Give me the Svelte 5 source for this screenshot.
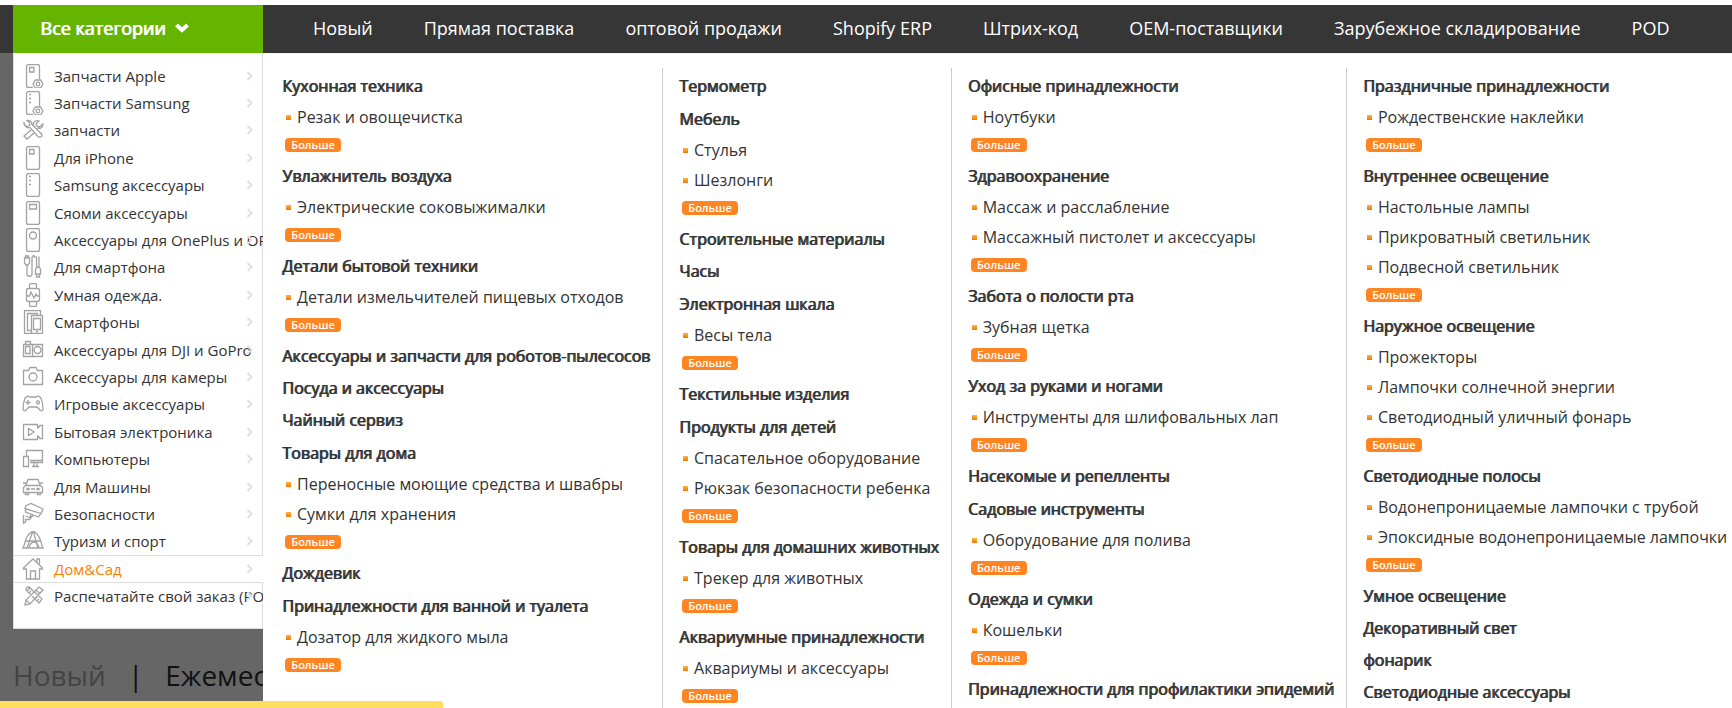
<script lang="ts">
	type Group = { title: string; items?: string[] };

	const navLinks = [
		'Новый',
		'Прямая поставка',
		'оптовой продажи',
		'Shopify ERP',
		'Штрих-код',
		'OEM-поставщики',
		'Зарубежное складирование',
		'POD'
	];

	const phone = 'M6.5 .5h9a2 2 0 0 1 2 2v19a2 2 0 0 1-2 2h-9a2 2 0 0 1-2-2v-19a2 2 0 0 1 2-2z';
	const phoneCut = 'M11 23.5H6.5a2 2 0 0 1-2-2v-19a2 2 0 0 1 2-2h9a2 2 0 0 1 2 2V15';
	const gear = 'M13.5 16h5l2.5 4-2.5 4h-5L11 20zM16 18.2a1.8 1.8 0 1 0 0 3.6a1.8 1.8 0 1 0 0-3.6z';
	const dots = 'M7 3.5h2M7 7.5h2M7 11.5h2';

	const categories = [
		{ name: 'Запчасти Apple', icon: `${phoneCut}M7.5 3.5h4.5v4.5H7.5z${gear}` },
		{ name: 'Запчасти Samsung', icon: `${phoneCut}${dots}${gear}` },
		{
			name: 'запчасти',
			icon: 'M2 6l3 3 3-2-1-3-2-1.5c3-.5 5 1 5 4l8 8c1 1 2 1 2 3s-3 2-4 1l-8-9c-3 1-6-1-6-5.5zM13 9l-2-2c0-3 3-5 6-4l-3 3 1 2 2 1 4-3c0 4-3 5-6 4M9 12l-7 6 3 3 7-6'
		},
		{ name: 'Для iPhone', icon: `${phone}M7.5 3.5h4.5v4.5H7.5z` },
		{ name: 'Samsung аксессуары', icon: `${phone}${dots}` },
		{ name: 'Сяоми аксессуары', icon: `${phone}M7.5 3.5h7v4.5h-7z` },
		{ name: 'Аксессуары для OnePlus и OPPO', icon: `${phone}M11 4a3.5 3.5 0 1 0 0 7a3.5 3.5 0 1 0 0-7z` },
		{
			name: 'Для смартфона',
			icon: 'M3.5 3V1h3v2M2.5 3h5v5L6 10H4L2.5 8zM5 10v9c0 3 5 3 5 0V3c0-3 3-3 3 0M14.5 1.5v10M17 1.5v10M13.5 14l1.5-2h2l1.5 2v5h-5zM14.5 19v3h3v-3'
		},
		{
			name: 'Умная одежда.',
			icon: 'M7.5 6V2q0-1.5 1.5-1.5h4q1.5 0 1.5 1.5v4M7.5 18v4q0 1.5 1.5 1.5h4q1.5 0 1.5-1.5v-4M6.5 5.5h9q2 0 2 2v9q0 2-2 2h-9q-2 0-2-2v-9q0-2 2-2zM4.5 13h3l1.5-4 3 6 2-4 1 2h2.5'
		},
		{
			name: 'Смартфоны',
			icon: 'M10.5 23.5h-8v-23h16v5M10 20.5H5.5v-17h10v2M9.5 5.5h11v18h-11zM11.5 8.5h7v11h-7zM14 21.5h2'
		},
		{
			name: 'Аксессуары для DJI и GoPro',
			icon: 'M1.5 6.5h19v12h-19zM3.5 6V3.5h5V6M3.5 8.5h4.5v7H3.5zM10.5 6v12M15.5 8.5a3.5 3.5 0 1 0 0 7a3.5 3.5 0 1 0 0-7z'
		},
		{
			name: 'Аксессуары для камеры',
			icon: 'M1.5 5.5h5l1.5-3h6l1.5 3h5v14h-19zM11 8a4 4 0 1 0 0 8a4 4 0 1 0 0-8z'
		},
		{
			name: 'Игровые аксессуары',
			icon: 'M3 6l3-2 2 1h6l2-1 3 2q2 5 2 11.5q-1.5 3-4-.5l-2-2H7l-2 2q-2.5 3.5-4 .5Q1 11 3 6zM6 8v5M3.5 10.5h5M16 9a1.5 1.5 0 1 0 0 3a1.5 1.5 0 1 0 0-3z'
		},
		{
			name: 'Бытовая электроника',
			icon: 'M15.5 8.5v-4h-14v15h14v-4M15.5 8.5l2.5-3h2.5v13H18l-2.5-3M6.5 8.5v7l5.5-3.5z'
		},
		{
			name: 'Компьютеры',
			icon: 'M4.5 9V3.5h16v12H8M1.5 9.5h5v10h-5zM8 13.5h12M10 19.5h7M12 16v3M15 16v3'
		},
		{
			name: 'Для Машины',
			icon: 'M4 10l2-5.5h10l2 5.5M1 8h3M18 8h3M3.5 10.5h15l2 2v5h-19v-5zM3.5 18v1.5h3V18M15.5 18v1.5h3V18M5 13.5h2v1H5zM15 13.5h2v1h-2zM9 14h4'
		},
		{
			name: 'Безопасности',
			icon: 'M4 3.5l5-2 12 5.5-2 4.500L3 6.500zM3.500 7v3l13 5 2.500-4M9 12.500l-1 3-4.500-1.500M1.500 13v8l2-1v-2.500h4L11 13.500'
		},
		{
			name: 'Туризм и спорт',
			icon: 'M1 19c2-3 1-6 4-11 4-7 8-7 12 0 3 5 2 8 4 11H1zM10.5 3L5 19M11.5 3L16 19M3 12h16M7 19c1-4 3-6 5-6s4 2 5 6'
		},
		{
			name: 'Дом&Сад',
			icon: 'M1.5 11L11 2l9.5 9v1h-3v10h-13V12h-3zM15 5V2h2.5v5M8.5 22v-8h5v8'
		},
		{
			name: 'Распечатайте свой заказ (POD)',
			icon: 'M4 6q0-3 3-3l13 12-3 4L4 6zM17 3l4 3-13 14-5 1 1-5zM5 7l3-3M7 9l2-2M13 15l2-2M15 17l2-2M14 6l4 4M4 16l4 4'
		}
	];

	const activeCategory = 'Дом&Сад';

	const columns: Group[][] = [
		[
			{ title: 'Кухонная техника', items: ['Резак и овощечистка'] },
			{ title: 'Увлажнитель воздуха', items: ['Электрические соковыжималки'] },
			{ title: 'Детали бытовой техники', items: ['Детали измельчителей пищевых отходов'] },
			{ title: 'Аксессуары и запчасти для роботов-пылесосов' },
			{ title: 'Посуда и аксессуары' },
			{ title: 'Чайный сервиз' },
			{ title: 'Товары для дома', items: ['Переносные моющие средства и швабры', 'Сумки для хранения'] },
			{ title: 'Дождевик' },
			{ title: 'Принадлежности для ванной и туалета', items: ['Дозатор для жидкого мыла'] }
		],
		[
			{ title: 'Термометр' },
			{ title: 'Мебель', items: ['Стулья', 'Шезлонги'] },
			{ title: 'Строительные материалы' },
			{ title: 'Часы' },
			{ title: 'Электронная шкала', items: ['Весы тела'] },
			{ title: 'Текстильные изделия' },
			{ title: 'Продукты для детей', items: ['Спасательное оборудование', 'Рюкзак безопасности ребенка'] },
			{ title: 'Товары для домашних животных', items: ['Трекер для животных'] },
			{ title: 'Аквариумные принадлежности', items: ['Аквариумы и аксессуары'] }
		],
		[
			{ title: 'Офисные принадлежности', items: ['Ноутбуки'] },
			{ title: 'Здравоохранение', items: ['Массаж и расслабление', 'Массажный пистолет и аксессуары'] },
			{ title: 'Забота о полости рта', items: ['Зубная щетка'] },
			{ title: 'Уход за руками и ногами', items: ['Инструменты для шлифовальных лап'] },
			{ title: 'Насекомые и репелленты' },
			{ title: 'Садовые инструменты', items: ['Оборудование для полива'] },
			{ title: 'Одежда и сумки', items: ['Кошельки'] },
			{ title: 'Принадлежности для профилактики эпидемий' }
		],
		[
			{ title: 'Праздничные принадлежности', items: ['Рождественские наклейки'] },
			{ title: 'Внутреннее освещение', items: ['Настольные лампы', 'Прикроватный светильник', 'Подвесной светильник'] },
			{ title: 'Наружное освещение', items: ['Прожекторы', 'Лампочки солнечной энергии', 'Светодиодный уличный фонарь'] },
			{ title: 'Светодиодные полосы', items: ['Водонепроницаемые лампочки с трубой', 'Эпоксидные водонепроницаемые лампочки'] },
			{ title: 'Умное освещение' },
			{ title: 'Декоративный свет' },
			{ title: 'фонарик' },
			{ title: 'Светодиодные аксессуары' }
		]
	];
</script>

<div class="page">
	<header class="topbar">
		<button class="all-categories">
			Все категории
			<svg width="14" height="10" viewBox="0 0 14 10"><path d="M1.5 2l5.5 5 5.5-5" /></svg>
		</button>
		<nav class="nav">
			{#each navLinks as link (link)}
				<a href="#top">{link}</a>
			{/each}
		</nav>
	</header>

	<div class="body">
		<div class="left">
			<aside class="sidebar">
				<ul class="categories">
					{#each categories as category (category.name)}
						<li class:active={category.name === activeCategory}>
							<a href="#category">
								<svg class="icon" viewBox="0 0 22 24"><path d={category.icon} /></svg>
								<span class="name">{category.name}</span>
								<svg class="chevron" viewBox="0 0 8 10"><path d="M1.5 1l4 4-4 4" /></svg>
							</a>
						</li>
					{/each}
				</ul>
			</aside>
			<div class="tabs">
				<span class="muted">Новый</span>
				<span>|</span>
				<span>Ежемесячный</span>
			</div>
		</div>

		<div class="panel">
			{#each columns as groups, i (i)}
				<div class="column">
					{#each groups as group (group.title)}
						<section class:plain={!group.items}>
							<h3><a href="#group">{group.title}</a></h3>
							{#if group.items}
								<ul>
									{#each group.items as item (item)}
										<li><a href="#item">{item}</a></li>
									{/each}
								</ul>
								<a class="more" href="#more">Больше</a>
							{/if}
						</section>
					{/each}
				</div>
			{/each}
		</div>
	</div>

	<div class="notice"></div>
</div>

<style>
	:global(body) {
		margin: 0;
		background: #fff;
	}

	.page {
		display: flex;
		flex-direction: column;
		height: 100vh;
		overflow: hidden;
		font-family: 'Open Sans', 'Noto Sans', sans-serif;
		color: #333;
	}

	a {
		color: inherit;
		text-decoration: none;
	}

	ul {
		list-style: none;
		margin: 0;
		padding: 0;
	}

	.topbar {
		display: flex;
		flex-shrink: 0;
		height: 48px;
		margin-top: 5px;
		padding-left: 13px;
		background: #363636;
	}

	.all-categories {
		display: flex;
		align-items: center;
		gap: 10px;
		flex-shrink: 0;
		width: 250px;
		padding: 0 0 2px 27px;
		border: none;
		background: #65b400;
		color: #fff;
		font-family: inherit;
		font-size: 18px;
		text-shadow: 1px 0 0 currentColor;
		cursor: pointer;
	}

	.all-categories svg path {
		fill: none;
		stroke: #fff;
		stroke-width: 4;
	}

	.nav {
		display: flex;
		align-items: center;
		gap: 51px;
		padding: 0 0 2px 50px;
		color: #fff;
		font-size: 18px;
		white-space: nowrap;
	}

	.body {
		display: flex;
		flex: 1;
		min-height: 0;
	}

	.left {
		flex-shrink: 0;
		box-sizing: border-box;
		width: 263px;
		padding-left: 13px;
		overflow: hidden;
		background: #666;
	}

	.sidebar {
		padding: 9px 0 18px;
		border: 1px solid #ddd;
		border-top: none;
		background: #fff;
	}

	.categories {
		display: grid;
		grid-template-rows: repeat(20, 1fr);
		height: 548px;
		margin-right: -1px;
	}

	.categories li {
		display: flex;
		border: solid transparent;
		border-width: 1px 0;
		overflow: hidden;
	}

	.categories li.active {
		border-color: #ddd;
		background: #fff;
		color: #ff7e00;
	}

	.categories a {
		display: flex;
		align-items: center;
		width: 100%;
		padding-left: 8px;
		font-size: 15px;
		white-space: nowrap;
	}

	.icon {
		flex-shrink: 0;
		width: 22px;
		height: 24px;
		margin-right: 10px;
	}

	.icon path {
		fill: none;
		stroke: #a2a2a2;
		stroke-width: 1.3;
	}

	.name {
		width: 192px;
		flex-shrink: 0;
	}

	.chevron {
		flex-shrink: 0;
		width: 8px;
		height: 10px;
	}

	.chevron path {
		fill: none;
		stroke: #e0e0e0;
		stroke-width: 2;
	}

	.tabs {
		display: flex;
		gap: 22px;
		margin-top: 27px;
		color: #111;
		font-size: 28px;
		white-space: nowrap;
	}

	.muted {
		color: #444;
	}

	.panel {
		display: flex;
		flex: 1;
		min-width: 0;
		padding: 14px 0 0 2px;
		border-top: 1px solid #eee;
		overflow: hidden;
		background: #fff;
	}

	.column {
		flex-shrink: 0;
		padding: 2px 12px 0 16px;
		border-left: 1px solid #ccc;
		white-space: nowrap;
	}

	.column:first-child {
		border-left-color: transparent;
	}

	.plain + section:not(.plain) {
		margin-top: 1px;
	}

	h3 {
		margin: 0;
		font-size: 16px;
		font-weight: 400;
		line-height: 32px;
		text-shadow: 1px 0 0 currentColor;
	}

	.column li {
		display: flex;
		align-items: center;
		gap: 6px;
		height: 30px;
		padding-left: 4px;
		font-size: 16px;
	}

	.column li::before {
		content: '';
		width: 5px;
		height: 5px;
		background: linear-gradient(#ffb347, #f07800);
	}

	.more {
		display: block;
		width: 56px;
		margin: 6px 0 8px 3px;
		border-radius: 4px;
		background: #ff8522;
		color: #fff;
		font-size: 11px;
		font-weight: 600;
		line-height: 14px;
		text-align: center;
	}

	.notice {
		position: fixed;
		left: 0;
		bottom: 0;
		width: 443px;
		height: 7px;
		border-top-right-radius: 3px;
		background: #ffde5e;
	}
</style>
